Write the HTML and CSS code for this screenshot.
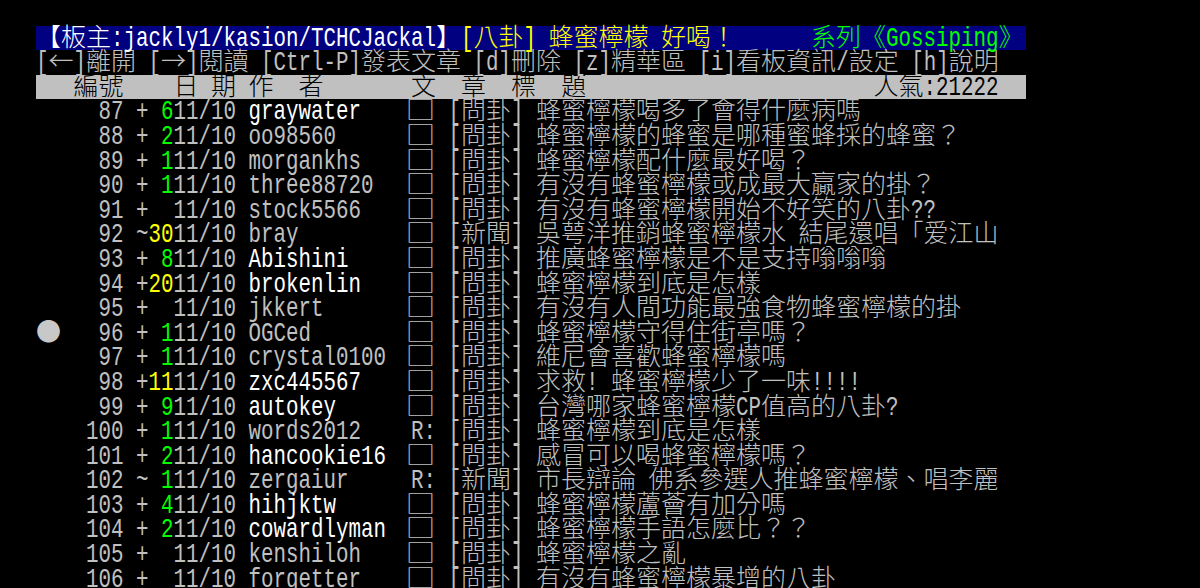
FILE: index.html
```html
<!DOCTYPE html>
<html lang="zh-Hant">
<head>
<meta charset="utf-8">
<title>Gossiping</title>
<link rel="stylesheet" href="styles.css">
</head>
<body>
<div class="term">
<div class="row bar-title"><span class="wh">【板主<span class="a">:jackly1/kasion/TCHCJackal</span>】</span><span class="yl"><span class="a">[</span>八卦<span class="a">] </span>蜂蜜檸檬<span class="a"> </span>好喝！</span><span class="gr">系列《<span class="a">Gossiping</span>》</span></div>
<div class="row menu"><span><span class="a">[</span>←<span class="a">]</span>離開<span class="a"> [</span>→<span class="a">]</span>閱讀<span class="a"> [Ctrl-P]</span>發表文章<span class="a"> [d]</span>刪除<span class="a"> [z]</span>精華區<span class="a"> [i]</span>看板資訊<span class="a">/</span>設定<span class="a"> [h]</span>說明</span></div>
<div class="row bar-head"><span><span class="a">   </span>編號<span class="a">    </span>日<span class="a"> </span>期<span class="a"> </span>作<span class="a">  </span>者<span class="a">       </span>文<span class="a">  </span>章<span class="a">  </span>標<span class="a">  </span>題</span><span class="pop">人氣<span class="a">:21222</span></span></div>
<div class="row"><span class="cur"></span><span class="num"><span class="a">87</span></span><span class="mark"><span class="a">+</span></span><span class="push g"><span class="a">6</span></span><span class="date"><span class="a">11/10</span></span><span class="author hi"><span class="a">graywater</span></span><span class="box"><span class="sq">□</span></span><span class="cat"><span class="a">[</span>問卦<span class="a">]</span></span><span class="ttl">蜂蜜檸檬喝多了會得什麼病嗎</span></div>
<div class="row"><span class="cur"></span><span class="num"><span class="a">88</span></span><span class="mark"><span class="a">+</span></span><span class="push g"><span class="a">2</span></span><span class="date"><span class="a">11/10</span></span><span class="author"><span class="a">oo98560</span></span><span class="box"><span class="sq">□</span></span><span class="cat"><span class="a">[</span>問卦<span class="a">]</span></span><span class="ttl">蜂蜜檸檬的蜂蜜是哪種蜜蜂採的蜂蜜？</span></div>
<div class="row"><span class="cur"></span><span class="num"><span class="a">89</span></span><span class="mark"><span class="a">+</span></span><span class="push g"><span class="a">1</span></span><span class="date"><span class="a">11/10</span></span><span class="author"><span class="a">morgankhs</span></span><span class="box"><span class="sq">□</span></span><span class="cat"><span class="a">[</span>問卦<span class="a">]</span></span><span class="ttl">蜂蜜檸檬配什麼最好喝？</span></div>
<div class="row"><span class="cur"></span><span class="num"><span class="a">90</span></span><span class="mark"><span class="a">+</span></span><span class="push g"><span class="a">1</span></span><span class="date"><span class="a">11/10</span></span><span class="author"><span class="a">three88720</span></span><span class="box"><span class="sq">□</span></span><span class="cat"><span class="a">[</span>問卦<span class="a">]</span></span><span class="ttl">有沒有蜂蜜檸檬或成最大贏家的掛？</span></div>
<div class="row"><span class="cur"></span><span class="num"><span class="a">91</span></span><span class="mark"><span class="a">+</span></span><span class="push"></span><span class="date"><span class="a">11/10</span></span><span class="author"><span class="a">stock5566</span></span><span class="box"><span class="sq">□</span></span><span class="cat"><span class="a">[</span>問卦<span class="a">]</span></span><span class="ttl">有沒有蜂蜜檸檬開始不好笑的八卦<span class="a">??</span></span></div>
<div class="row"><span class="cur"></span><span class="num"><span class="a">92</span></span><span class="mark"><span class="a">~</span></span><span class="push y"><span class="a">30</span></span><span class="date"><span class="a">11/10</span></span><span class="author"><span class="a">bray</span></span><span class="box"><span class="sq">□</span></span><span class="cat"><span class="a">[</span>新聞<span class="a">]</span></span><span class="ttl">吳萼洋推銷蜂蜜檸檬水<span class="a"> </span>結尾還唱「爱江山</span></div>
<div class="row"><span class="cur"></span><span class="num"><span class="a">93</span></span><span class="mark"><span class="a">+</span></span><span class="push g"><span class="a">8</span></span><span class="date"><span class="a">11/10</span></span><span class="author hi"><span class="a">Abishini</span></span><span class="box"><span class="sq">□</span></span><span class="cat"><span class="a">[</span>問卦<span class="a">]</span></span><span class="ttl">推廣蜂蜜檸檬是不是支持嗡嗡嗡</span></div>
<div class="row"><span class="cur"></span><span class="num"><span class="a">94</span></span><span class="mark"><span class="a">+</span></span><span class="push y"><span class="a">20</span></span><span class="date"><span class="a">11/10</span></span><span class="author hi"><span class="a">brokenlin</span></span><span class="box"><span class="sq">□</span></span><span class="cat"><span class="a">[</span>問卦<span class="a">]</span></span><span class="ttl">蜂蜜檸檬到底是怎樣</span></div>
<div class="row"><span class="cur"></span><span class="num"><span class="a">95</span></span><span class="mark"><span class="a">+</span></span><span class="push"></span><span class="date"><span class="a">11/10</span></span><span class="author"><span class="a">jkkert</span></span><span class="box"><span class="sq">□</span></span><span class="cat"><span class="a">[</span>問卦<span class="a">]</span></span><span class="ttl">有沒有人間功能最強食物蜂蜜檸檬的掛</span></div>
<div class="row"><span class="cur">●</span><span class="num"><span class="a">96</span></span><span class="mark"><span class="a">+</span></span><span class="push g"><span class="a">1</span></span><span class="date"><span class="a">11/10</span></span><span class="author"><span class="a">OGCed</span></span><span class="box"><span class="sq">□</span></span><span class="cat"><span class="a">[</span>問卦<span class="a">]</span></span><span class="ttl">蜂蜜檸檬守得住街亭嗎？</span></div>
<div class="row"><span class="cur"></span><span class="num"><span class="a">97</span></span><span class="mark"><span class="a">+</span></span><span class="push g"><span class="a">1</span></span><span class="date"><span class="a">11/10</span></span><span class="author"><span class="a">crystal0100</span></span><span class="box"><span class="sq">□</span></span><span class="cat"><span class="a">[</span>問卦<span class="a">]</span></span><span class="ttl">維尼會喜歡蜂蜜檸檬嗎</span></div>
<div class="row"><span class="cur"></span><span class="num"><span class="a">98</span></span><span class="mark"><span class="a">+</span></span><span class="push y"><span class="a">11</span></span><span class="date"><span class="a">11/10</span></span><span class="author hi"><span class="a">zxc445567</span></span><span class="box"><span class="sq">□</span></span><span class="cat"><span class="a">[</span>問卦<span class="a">]</span></span><span class="ttl">求救<span class="a">! </span>蜂蜜檸檬少了一味<span class="a">!!!!</span></span></div>
<div class="row"><span class="cur"></span><span class="num"><span class="a">99</span></span><span class="mark"><span class="a">+</span></span><span class="push g"><span class="a">9</span></span><span class="date"><span class="a">11/10</span></span><span class="author hi"><span class="a">autokey</span></span><span class="box"><span class="sq">□</span></span><span class="cat"><span class="a">[</span>問卦<span class="a">]</span></span><span class="ttl">台灣哪家蜂蜜檸檬<span class="a">CP</span>值高的八卦<span class="a">?</span></span></div>
<div class="row"><span class="cur"></span><span class="num"><span class="a">100</span></span><span class="mark"><span class="a">+</span></span><span class="push g"><span class="a">1</span></span><span class="date"><span class="a">11/10</span></span><span class="author"><span class="a">words2012</span></span><span class="box"><span class="a">R:</span></span><span class="cat"><span class="a">[</span>問卦<span class="a">]</span></span><span class="ttl">蜂蜜檸檬到底是怎樣</span></div>
<div class="row"><span class="cur"></span><span class="num"><span class="a">101</span></span><span class="mark"><span class="a">+</span></span><span class="push g"><span class="a">2</span></span><span class="date"><span class="a">11/10</span></span><span class="author hi"><span class="a">hancookie16</span></span><span class="box"><span class="sq">□</span></span><span class="cat"><span class="a">[</span>問卦<span class="a">]</span></span><span class="ttl">感冒可以喝蜂蜜檸檬嗎？</span></div>
<div class="row"><span class="cur"></span><span class="num"><span class="a">102</span></span><span class="mark"><span class="a">~</span></span><span class="push g"><span class="a">1</span></span><span class="date"><span class="a">11/10</span></span><span class="author"><span class="a">zergaiur</span></span><span class="box"><span class="a">R:</span></span><span class="cat"><span class="a">[</span>新聞<span class="a">]</span></span><span class="ttl">市長辯論<span class="a"> </span>佛系參選人推蜂蜜檸檬、唱李麗</span></div>
<div class="row"><span class="cur"></span><span class="num"><span class="a">103</span></span><span class="mark"><span class="a">+</span></span><span class="push g"><span class="a">4</span></span><span class="date"><span class="a">11/10</span></span><span class="author hi"><span class="a">hihjktw</span></span><span class="box"><span class="sq">□</span></span><span class="cat"><span class="a">[</span>問卦<span class="a">]</span></span><span class="ttl">蜂蜜檸檬蘆薈有加分嗎</span></div>
<div class="row"><span class="cur"></span><span class="num"><span class="a">104</span></span><span class="mark"><span class="a">+</span></span><span class="push g"><span class="a">2</span></span><span class="date"><span class="a">11/10</span></span><span class="author hi"><span class="a">cowardlyman</span></span><span class="box"><span class="sq">□</span></span><span class="cat"><span class="a">[</span>問卦<span class="a">]</span></span><span class="ttl">蜂蜜檸檬手語怎麼比？？</span></div>
<div class="row"><span class="cur"></span><span class="num"><span class="a">105</span></span><span class="mark"><span class="a">+</span></span><span class="push"></span><span class="date"><span class="a">11/10</span></span><span class="author"><span class="a">kenshiloh</span></span><span class="box"><span class="sq">□</span></span><span class="cat"><span class="a">[</span>問卦<span class="a">]</span></span><span class="ttl">蜂蜜檸檬之亂</span></div>
<div class="row"><span class="cur"></span><span class="num"><span class="a">106</span></span><span class="mark"><span class="a">+</span></span><span class="push"></span><span class="date"><span class="a">11/10</span></span><span class="author"><span class="a">forgetter</span></span><span class="box"><span class="sq">□</span></span><span class="cat"><span class="a">[</span>問卦<span class="a">]</span></span><span class="ttl">有沒有蜂蜜檸檬暴增的八卦</span></div>
</div>
</body>
</html>
```
FILE: styles.css
```css
html, body {
  margin: 0;
  padding: 0;
  background: #000;
}
body {
  height: 588px;
  overflow: hidden;
}
.term {
  margin-left: 36px;
  padding-top: 25.6px;
  width: 990px;
  color: #c0c0c0;
  font-family: "Noto Sans CJK TC", "Noto Sans CJK SC", sans-serif;
  font-size: 25px;
  font-weight: 300;
}
.row {
  display: flex;
  height: 24.6px;
  line-height: 19.2px;
  white-space: pre;
}
.row > span {
  flex: none;
}
.a {
  display: inline-block;
  font-family: "Liberation Mono", monospace;
  font-weight: 400;
  font-size: 20.83px;
  line-height: 20.83px;
  transform: scaleY(1.34);
  transform-origin: 0 15.97px;
}
.bar-title {
  background: #000080;
}
.wh { color: #ffffff; }
.yl { color: #ffff00; }
.gr {
  color: #00ff00;
  margin-left: auto;
  padding-right: 2.5px;
}
.bar-head {
  background: #c0c0c0;
  color: #000;
}
.pop {
  margin-left: auto;
  padding-right: 27.5px;
}
.cur {
  width: 25px;
  color: #c8c8c8;
}
.num {
  width: 75px;
  box-sizing: border-box;
  padding-right: 12.5px;
  text-align: right;
}
.mark { width: 12.5px; }
.push {
  width: 25px;
  text-align: right;
}
.g { color: #00ff00; }
.y { color: #ffff00; }
.date { width: 75px; }
.author { width: 162.5px; }
.hi { color: #ffffff; }
.box { width: 37.5px; }
.sq {
  display: inline-block;
  font-size: 25px;
  line-height: 19.2px;
  margin-left: -3px;
  transform: scaleX(1.18);
  transform-origin: 50% 50%;
}
.cat { width: 87.5px; }
.row > .ttl { flex: 1 1 auto; }
```
